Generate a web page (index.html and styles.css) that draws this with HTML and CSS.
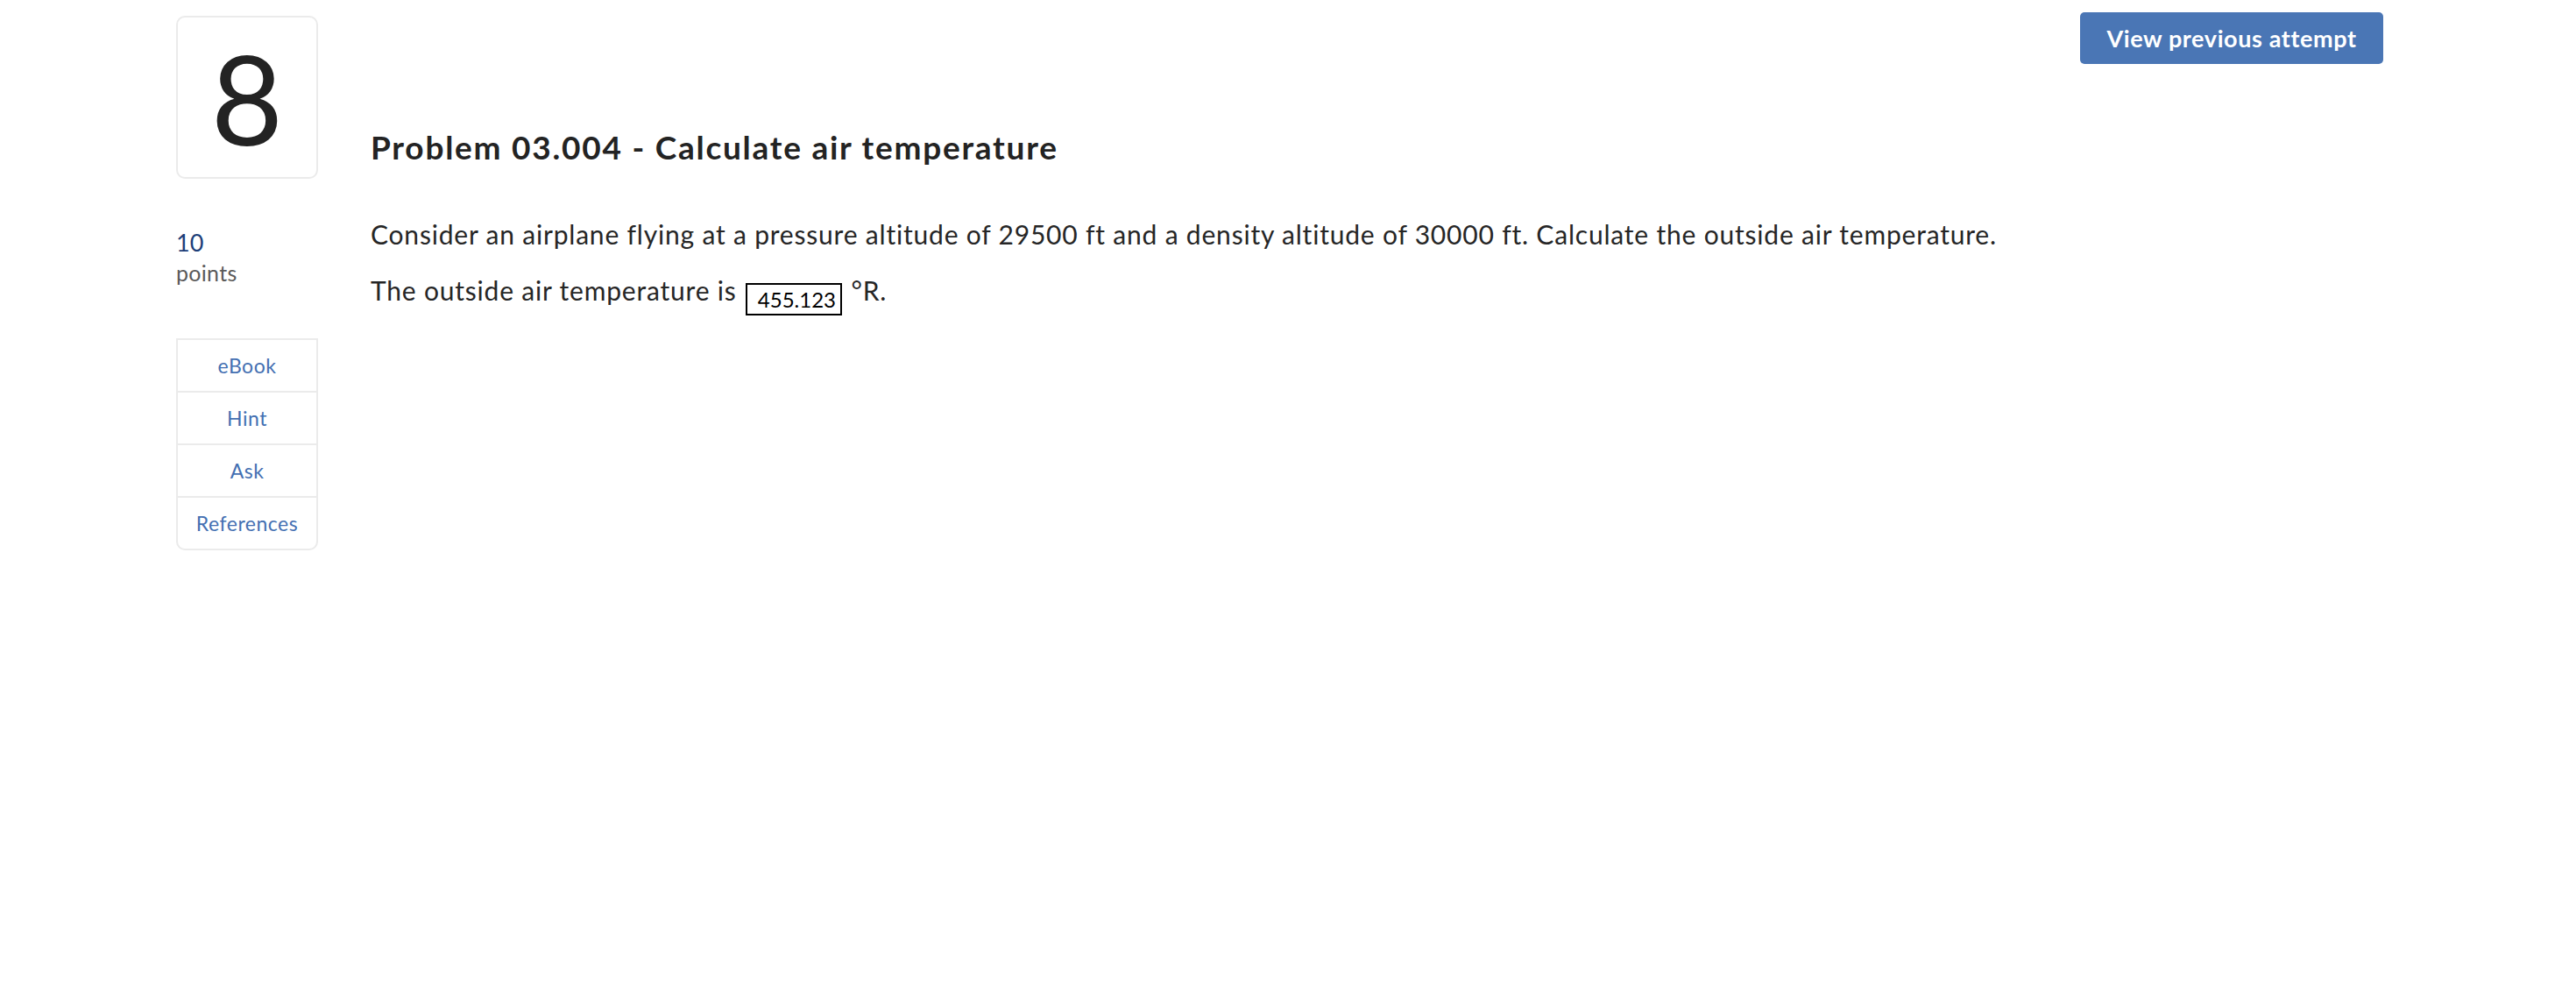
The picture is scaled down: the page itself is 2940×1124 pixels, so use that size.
FILE: index.html
```html
<!DOCTYPE html>
<html lang="en">
<head>
<meta charset="utf-8">
<title>Problem 03.004 - Calculate air temperature</title>
<link rel="stylesheet" href="styles.css">
</head>
<body>
<div class="page">
  <aside class="side">
    <div class="qnum">8</div>
    <div class="points">
      <div class="points-value">10</div>
      <div class="points-label">points</div>
    </div>
    <nav class="tools">
      <a class="tool" href="#">eBook</a>
      <a class="tool" href="#">Hint</a>
      <a class="tool" href="#">Ask</a>
      <a class="tool" href="#">References</a>
    </nav>
  </aside>
  <main class="main">
    <div class="topbar">
      <button class="prev-btn" type="button">View previous attempt</button>
    </div>
    <h1 class="title">Problem 03.004 - Calculate air temperature</h1>
    <p class="text">Consider an airplane flying at a pressure altitude of 29500 ft and a density altitude of 30000 ft. Calculate the outside air temperature.</p>
    <p class="text">The outside air temperature is <span class="answer">455.123</span> °R.</p>
  </main>
</div>
</body>
</html>
```

FILE: styles.css
```css
html, body {
  margin: 0;
  padding: 0;
  background: #ffffff;
}

body {
  font-family: "Lato", "Liberation Sans", sans-serif;
  color: #262626;
}

.page {
  display: flex;
  gap: 60px;
  padding: 14px 220px 0 201px;
}

.side {
  width: 162px;
  flex: 0 0 162px;
  padding-top: 4px;
}

.qnum {
  box-sizing: border-box;
  height: 186px;
  border: 2px solid #ebebeb;
  border-radius: 10px;
  display: flex;
  align-items: center;
  justify-content: center;
  font-size: 142px;
  font-weight: 400;
  line-height: 1;
  color: #232323;
}

.points {
  margin-top: 56px;
}

.points-value {
  font-size: 27px;
  line-height: 34px;
  color: #1d3e78;
}

.points-label {
  font-size: 25px;
  line-height: 34px;
  color: #5a5a5a;
  letter-spacing: 0.3px;
}

.tools {
  margin-top: 58px;
  border: 2px solid #ebebeb;
  border-radius: 0 0 10px 10px;
  display: flex;
  flex-direction: column;
}

.tool {
  display: block;
  height: 58px;
  line-height: 58px;
  text-align: center;
  font-size: 23px;
  letter-spacing: 0.5px;
  color: #4470b2;
  text-decoration: none;
}

.tool + .tool {
  border-top: 2px solid #ebebeb;
}

.main {
  flex: 1;
  min-width: 0;
}

.topbar {
  display: flex;
  justify-content: flex-end;
}

.prev-btn {
  width: 346px;
  height: 59px;
  border: none;
  border-radius: 5px;
  background: #4a76b5;
  color: #ffffff;
  font-family: "Lato", "Liberation Sans", sans-serif;
  font-weight: 700;
  font-size: 27px;
  letter-spacing: 0.6px;
  padding: 0;
}

.title {
  margin: 72px 0 0 0;
  font-size: 37px;
  line-height: 46px;
  font-weight: 700;
  letter-spacing: 1.75px;
  color: #232323;
}

.text {
  margin: 0;
  font-size: 30px;
  line-height: 40px;
  letter-spacing: 0.8px;
  color: #262626;
}

.title + .text {
  margin-top: 56px;
}

.text + .text {
  margin-top: 24px;
}

.answer {
  display: inline-block;
  box-sizing: border-box;
  width: 110px;
  height: 37px;
  border: 2px solid #000000;
  padding: 0 5px 0 0;
  text-align: right;
  font-size: 24px;
  line-height: 33px;
  letter-spacing: 0;
  color: #000000;
  vertical-align: -8px;
  margin: 0 2px 0 2px;
}
```
